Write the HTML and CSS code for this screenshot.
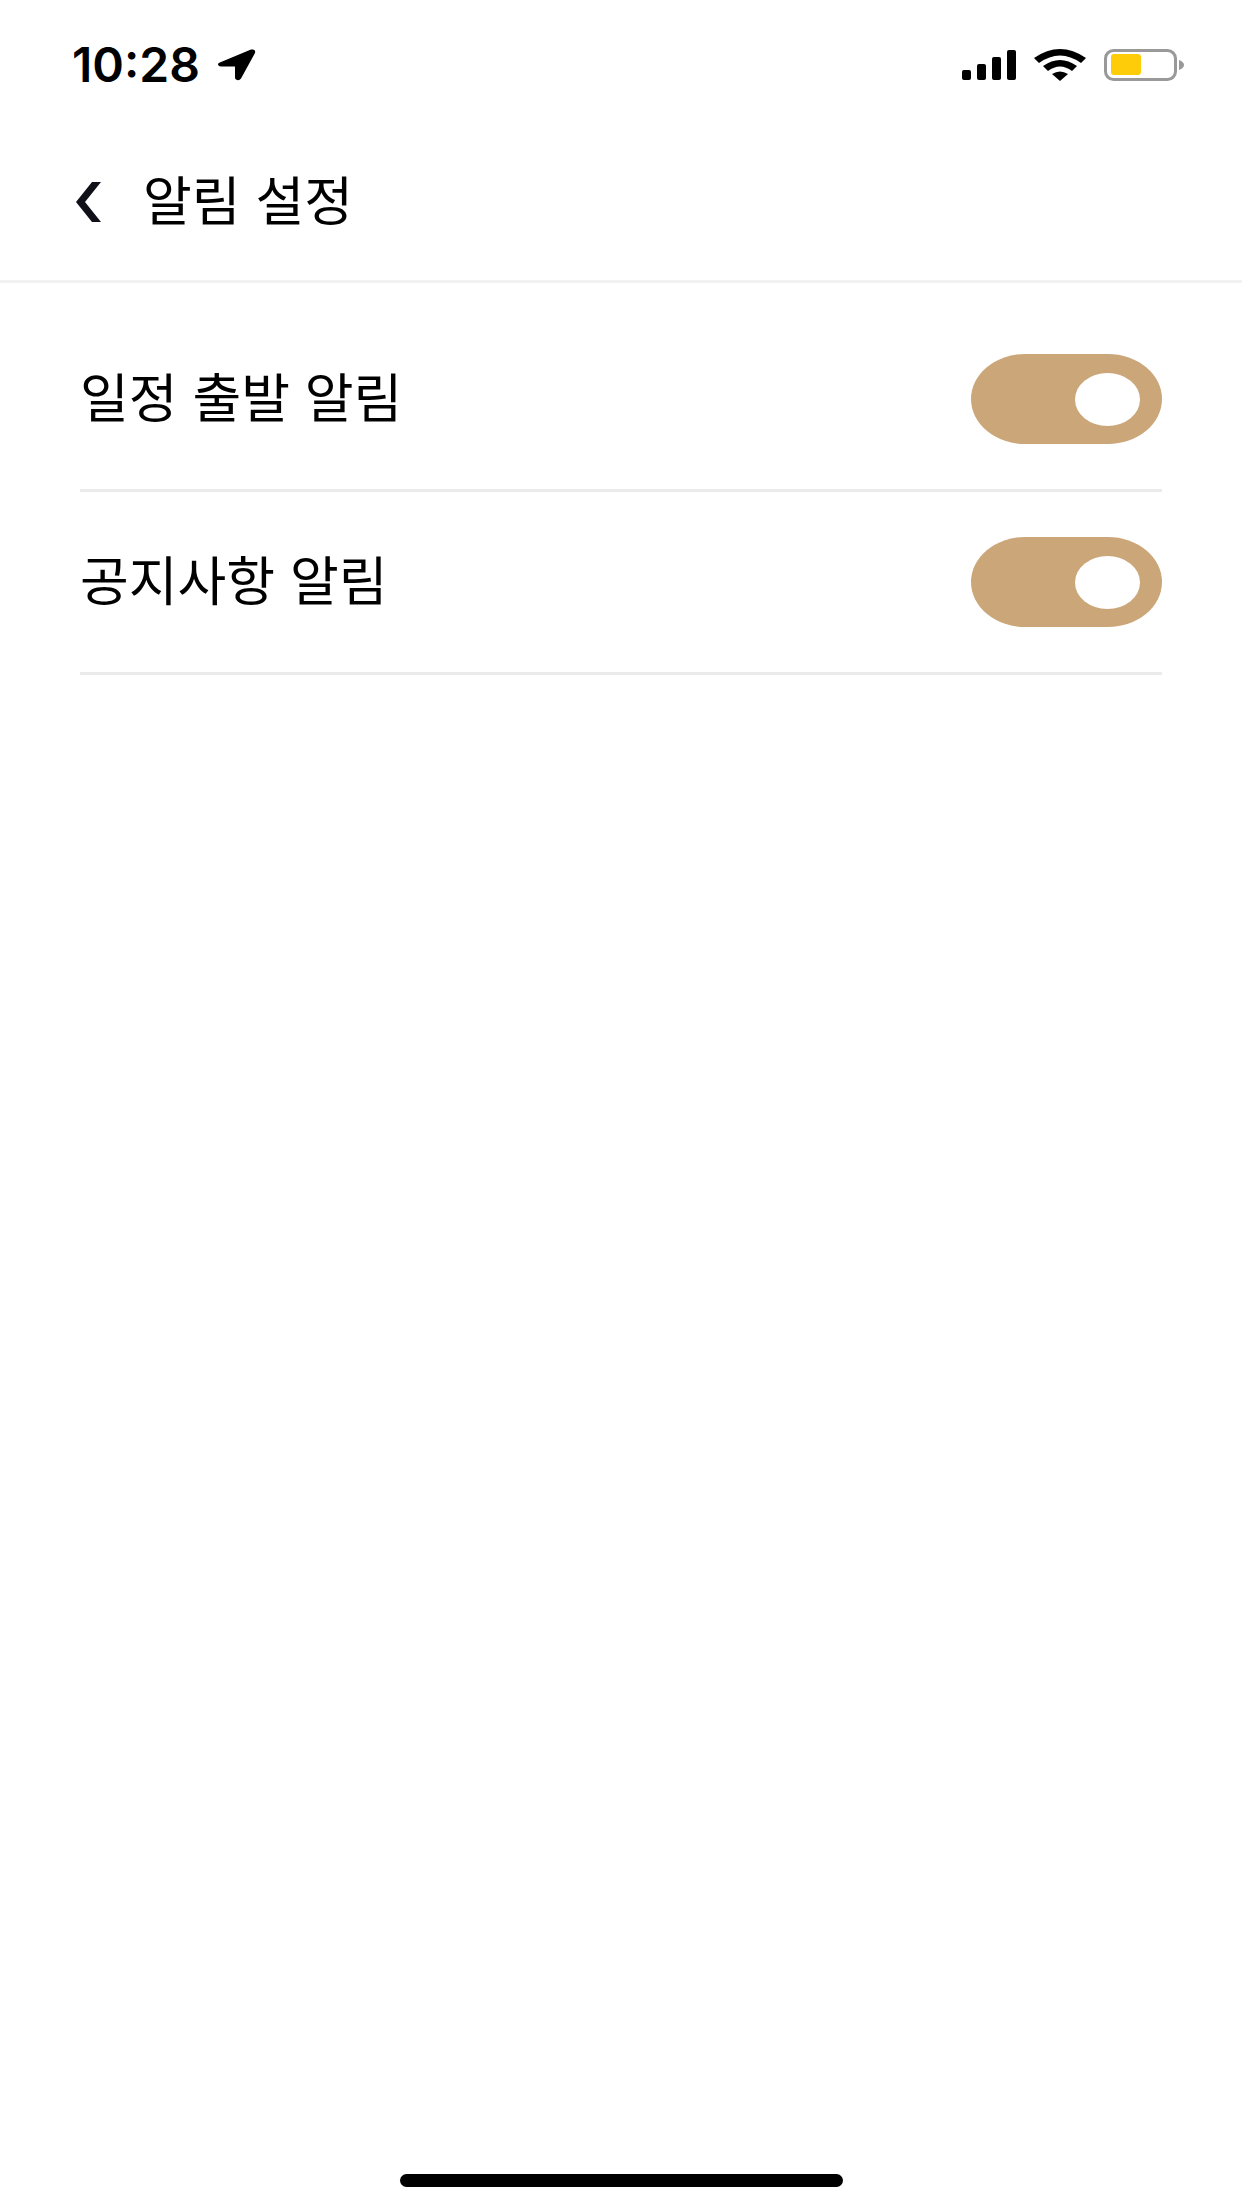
FILE: index.html
```
<!DOCTYPE html>
<html lang="ko">
<head>
    <meta charset="UTF-8">
    <meta name="viewport" content="width=device-width, initial-scale=1.0">
    <title>알림 설정</title>
    <link rel="stylesheet" href="styles.css">
</head>
<body>
    <div class="status-bar">
        <div class="status-left">
            <span class="time">10:28</span>
            <svg width="38" height="32" viewBox="0 0 38 32">
                <path d="M3 13 L33 0.6 Q38 -0.5 37 4 L23 29.5 Q21 32.500 18 30.500 Q17 30 17 28 V17.500 H3 Q0 17 0 15 Q0 14 3 13 Z"/>
            </svg>
        </div>
        <div class="status-right">
            <svg width="54" height="30" viewBox="0 0 54 30">
                <rect x="0" y="20" width="9" height="10" rx="2"/>
                <rect x="15" y="14" width="9" height="16" rx="2"/>
                <rect x="30" y="7" width="9" height="23" rx="2"/>
                <rect x="45" y="0" width="9" height="30" rx="2"/>
            </svg>
            <svg width="52" height="32" viewBox="0 0 52 32">
                <path d="M0 9 Q26 -9 52 9 L47 14 Q26 -1 5 14 Z"/>
                <path d="M9 17 Q26 5 43 17 L38 22 Q26 13 14 22 Z"/>
                <path d="M18 25 Q26 20 34 25 L26 32 Z"/>
            </svg>
            <svg width="80" height="32" viewBox="0 0 80 32">
                <rect class="battery-case" x="1.500" y="1.500" width="70" height="29" rx="8"/>
                <rect class="battery-level" x="7" y="5" width="30" height="21" rx="3"/>
                <path class="battery-tip" d="M75 11 Q80 13 80 16 Q80 19 75 21 Z"/>
            </svg>
        </div>
    </div>
    <header class="header">
        <button class="back" type="button" aria-label="뒤로">
            <svg width="25" height="40" viewBox="0 0 25 40">
                <path d="M16 0 H25 L9 20 L25 40 H16 L0 20 Z"/>
            </svg>
        </button>
        <h1>알림 설정</h1>
    </header>
    <main class="settings">
        <div class="row">
            <label for="schedule">일정 출발 알림</label>
            <input class="toggle" type="checkbox" role="switch" id="schedule" checked>
        </div>
        <div class="row">
            <label for="notice">공지사항 알림</label>
            <input class="toggle" type="checkbox" role="switch" id="notice" checked>
        </div>
    </main>
    <div class="home-indicator"></div>
</body>
</html>
```
FILE: styles.css
```
* {
    box-sizing: border-box;
}
body {
    display: flex;
    flex-direction: column;
    min-height: 100vh;
    margin: 0;
    font-family: Inter, "Noto Sans CJK KR", sans-serif;
    background-color: #fff;
    color: #000;
}
svg {
    display: block;
}
.status-bar {
    display: flex;
    justify-content: space-between;
    align-items: center;
    height: 130px;
    padding: 0 58px 0 72px;
}
.status-left {
    display: flex;
    align-items: center;
    gap: 18px;
}
.time {
    font-size: 48px;
    line-height: 52px;
    font-weight: 600;
}
.status-right {
    display: flex;
    align-items: center;
    gap: 18px;
}
.battery-case {
    fill: none;
    stroke: #999;
    stroke-width: 3;
}
.battery-level {
    fill: #ffcc0a;
}
.battery-tip {
    fill: #999;
}
.header {
    display: flex;
    align-items: center;
    gap: 18px;
    padding: 32px 52px 38px;
    border-bottom: 3px solid #f2f2f2;
}
.back {
    padding: 20px 24px;
    border: none;
    background: none;
    fill: #101018;
    cursor: pointer;
}
h1 {
    margin: 0;
    font-size: 53px;
    line-height: 78px;
    font-weight: 400;
}
.settings {
    flex: 1;
    padding: 26px 80px;
}
.row {
    display: flex;
    justify-content: space-between;
    align-items: center;
    padding: 45px 0;
    border-bottom: 3px solid #ebebeb;
}
.row label {
    font-size: 53px;
    line-height: 78px;
}
.toggle {
    appearance: none;
    display: flex;
    align-items: center;
    justify-content: flex-start;
    width: 191px;
    height: 90px;
    margin: 0;
    padding: 0 22px;
    border-radius: 54px / 45px;
    background-color: #ccc;
    cursor: pointer;
}
.toggle::before {
    content: "";
    width: 65px;
    height: 53px;
    border-radius: 50%;
    background-color: #fff;
}
.toggle:checked {
    justify-content: flex-end;
    background-color: #cba678;
}
.home-indicator {
    align-self: center;
    width: 443px;
    height: 13px;
    margin-bottom: 21px;
    border-radius: 8px;
    background-color: #000;
}
```
